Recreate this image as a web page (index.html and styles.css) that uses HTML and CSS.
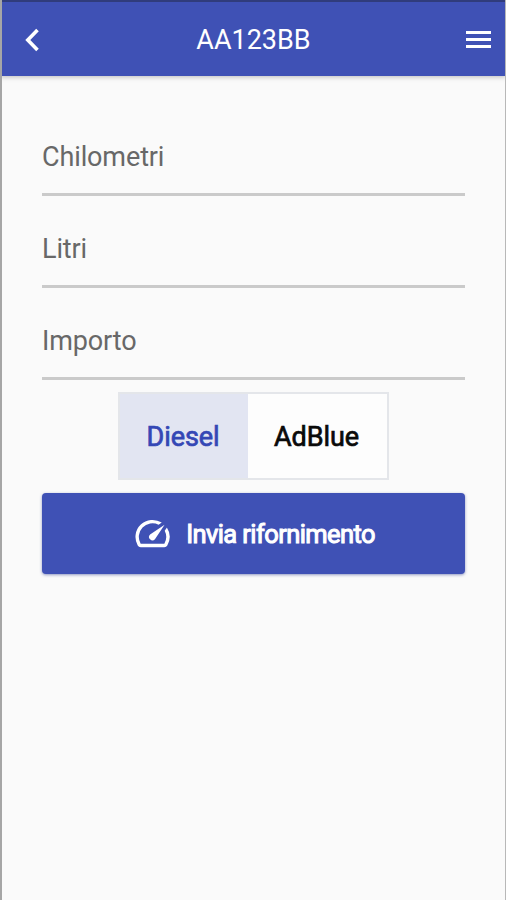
FILE: index.html
```html
<!DOCTYPE html>
<html lang="it">
<head>
<meta charset="utf-8">
<title>AA123BB</title>
<link rel="stylesheet" href="styles.css">
</head>
<body>
<div class="screen">
  <header class="toolbar">
    <svg class="back" viewBox="0 0 14 24"><path d="M12.5 2 2.8 12l9.7 10"/></svg>
    <h1 class="title">AA123BB</h1>
    <svg class="menu" viewBox="0 0 25 20"><path d="M0 2.5h25M0 9.5h25M0 16.5h25"/></svg>
  </header>
  <main class="form">
    <div class="field"><span>Chilometri</span></div>
    <div class="field"><span>Litri</span></div>
    <div class="field"><span>Importo</span></div>
    <div class="toggle">
      <div class="option selected"><span>Diesel</span></div>
      <div class="option"><span>AdBlue</span></div>
    </div>
    <div class="submit">
      <svg class="gauge" viewBox="0 0 24 24"><path d="M20.38 8.57l-1.23 1.85a8 8 0 0 1-.22 7.58H5.07A8 8 0 0 1 15.58 6.85l1.85-1.23A10 10 0 0 0 3.35 19a2 2 0 0 0 1.72 1h13.85a2 2 0 0 0 1.74-1 10 10 0 0 0-.27-10.44z"/><path d="M10.59 15.41a2 2 0 0 0 2.83 0l5.66-8.49-8.49 5.66a2 2 0 0 0 0 2.83z"/></svg>
      <span>Invia rifornimento</span>
    </div>
  </main>
</div>
</body>
</html>
```
FILE: styles.css
```css
* { box-sizing: border-box; }

body {
  margin: 0;
  font-family: Roboto, "Liberation Sans", sans-serif;
  font-size: 27px;
  background: #fafafa;
}

.screen {
  height: 900px;
  overflow: hidden;
  border-left: 2px solid #a6a6a6;
  border-right: 1px solid #b8b8b8;
  background: #fafafa;
}

.toolbar {
  display: grid;
  grid-template-columns: 60px 1fr 60px;
  align-items: center;
  height: 76px;
  margin: 0 -1px 0 -2px;
  border-top: 2px solid #303c7c;
  border-left: 2px solid #37458f;
  border-right: 1px solid #5563b0;
  background: #3f51b5;
  color: #fff;
  box-shadow: 0 1px 5px rgba(0, 0, 0, .25);
}

.back {
  width: 14px;
  height: 24px;
  margin: 1px 0 0 23px;
  fill: none;
  stroke: #fff;
  stroke-width: 3.6;
}

.title {
  margin: 2px 0 0;
  font-size: 27px;
  font-weight: 400;
  line-height: 30px;
  text-align: center;
}

.menu {
  width: 25px;
  height: 20px;
  margin: 2px 0 0 21px;
  fill: none;
  stroke: #fff;
  stroke-width: 3.2;
}

.form {
  padding: 28px 40px 0;
}

.field {
  display: flex;
  align-items: flex-end;
  height: 92px;
  padding-bottom: 19px;
  border-bottom: 3px solid #cacaca;
  color: #686868;
  line-height: 34px;
  letter-spacing: -.12px;
}

.toggle {
  display: flex;
  width: 271px;
  height: 88px;
  margin: 12px auto 0;
  border: 2px solid #e4e6ea;
  background: #fdfdfd;
}

.option {
  display: flex;
  flex: 1;
  align-items: center;
  justify-content: center;
  padding: 2px 2px 0 0;
  color: #0a0a0a;
  letter-spacing: -.1px;
  -webkit-text-stroke: .7px currentColor;
}

.selected {
  flex: 0 0 128px;
  background: #e2e5f2;
  color: #3447b5;
}

.submit {
  display: flex;
  align-items: center;
  justify-content: center;
  gap: 13px;
  height: 81px;
  margin-top: 13px;
  border-radius: 4px;
  background: #3f51b5;
  color: #fff;
  font-size: 25.5px;
  letter-spacing: -.6px;
  -webkit-text-stroke: 1px currentColor;
  box-shadow: 0 1px 3px rgba(40, 55, 140, .5);
}

.gauge {
  width: 41px;
  height: 41px;
  fill: #fff;
}
```
